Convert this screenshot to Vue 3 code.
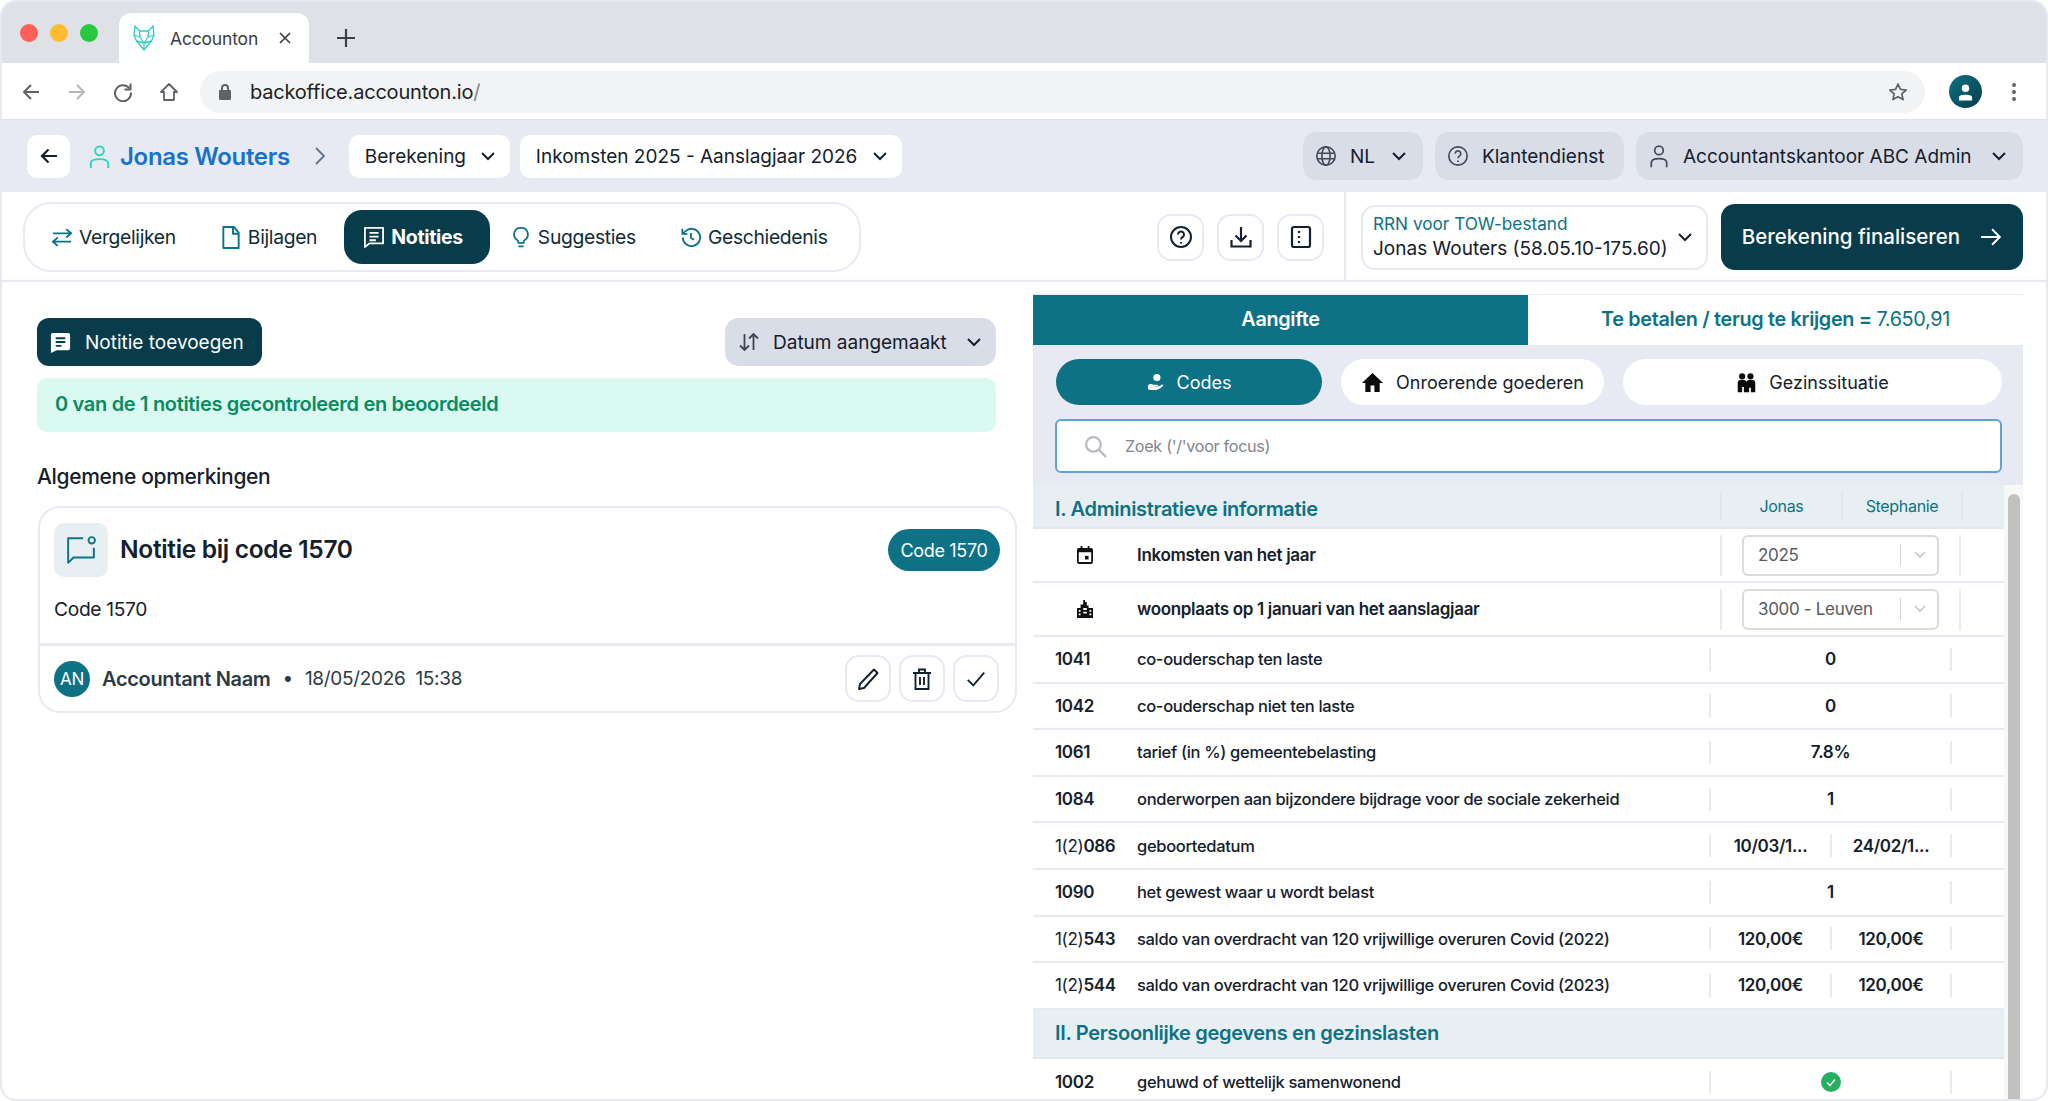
<template>
  <div class="window">
    <div class="tabStrip">
      <div class="lights">
        <span class="light light--red"></span>
        <span class="light light--amber"></span>
        <span class="light light--green"></span>
      </div>
      <div class="browserTab">
        <svg class="favicon" viewBox="0 0 24 26" fill="none" stroke="#2fd0bd" stroke-width="1.3" stroke-linejoin="round">
          <path d="M3 1l4.500 5h9L21 1l1 9-2.500 6L12 25 4.500 16 2 10z" />
          <path d="M2 10l6 2 4 6 4-6 6-2M7.500 6L8 12M16.500 6L16 12M4.500 16L12 18l7.500-2M12 18v7" />
        </svg>
        <span class="browserTabTitle">Accounton</span>
        <svg class="browserTabClose" viewBox="0 0 14 14" fill="none" stroke="#3c4043" stroke-width="1.700"><path d="M2 2l10 10M12 2L2 12" /></svg>
      </div>
      <svg class="newTab" viewBox="0 0 20 20" fill="none" stroke="#3c4043" stroke-width="2.200"><path d="M10 1v18M1 10h18" /></svg>
    </div>

    <div class="toolbar">
      <svg class="navIcon" viewBox="0 0 20 20" fill="none" stroke="#5f6368" stroke-width="2"><path d="M18 10H3M10 3l-7 7 7 7" /></svg>
      <svg class="navIcon" viewBox="0 0 20 20" fill="none" stroke="#b4b7bb" stroke-width="2"><path d="M2 10h15M10 3l7 7-7 7" /></svg>
      <svg class="navIcon" viewBox="0 0 20 20" fill="none" stroke="#5f6368" stroke-width="2"><path d="M16.500 6.500A8 8 0 1 0 18 10.500" /><path d="M17.500 1.500v6h-6" /></svg>
      <svg class="navIcon" viewBox="0 0 20 20" fill="none" stroke="#5f6368" stroke-width="1.800" stroke-linejoin="round"><path d="M10 2l8 8h-3v8H5v-8H2z" /></svg>
      <div class="addressBar">
        <svg class="lock" viewBox="0 0 14 18" fill="#5f6368"><path d="M2 7h1V5a4 4 0 0 1 8 0v2h1a1 1 0 0 1 1 1v8a1 1 0 0 1-1 1H2a1 1 0 0 1-1-1V8a1 1 0 0 1 1-1zm3 0h4V5a2 2 0 0 0-4 0z" /></svg>
        <span class="url">backoffice.accounton.io<span class="urlSlash">/</span></span>
        <svg class="star" viewBox="0 0 20 20" fill="none" stroke="#5f6368" stroke-width="1.700" stroke-linejoin="round"><path d="M10 2l2.400 5.400 5.800.6-4.400 3.900 1.300 5.700L10 14.700l-5.100 2.900 1.300-5.700L1.800 8l5.800-.6z" /></svg>
      </div>
      <div class="profile">
        <svg viewBox="0 0 16 18" width="15" height="18" fill="#fff"><circle cx="8" cy="5" r="4" /><path d="M1 18v-3c0-2 2-3 7-3s7 1 7 3v3z" /></svg>
      </div>
      <span class="kebab"><i></i><i></i><i></i></span>
    </div>

    <header class="appBar">
      <button class="backBtn" type="button">
        <svg viewBox="0 0 20 20" width="20" height="20" fill="none" stroke="#14202b" stroke-width="2.200"><path d="M18 10H3M9.500 3.500L3 10l6.500 6.500" /></svg>
      </button>
      <svg class="nameIcon" viewBox="0 0 24 28" fill="none" stroke="#2dd4bf" stroke-width="2.200"><circle cx="12" cy="7.500" r="5" /><path d="M2 27v-5c0-3 3-5 10-5s10 2 10 5v5" /></svg>
      <span class="clientName">Jonas Wouters</span>
      <svg class="crumb" viewBox="0 0 10 20" fill="none" stroke="#667085" stroke-width="1.800"><path d="M1 2l8 8-8 8" /></svg>
      <button class="whiteSelect selectCalc" type="button">Berekening
        <svg class="chev" viewBox="0 0 14 9"><path d="M1 1l6 6 6-6" /></svg>
      </button>
      <button class="whiteSelect selectYear" type="button">Inkomsten 2025 - Aanslagjaar 2026
        <svg class="chev" viewBox="0 0 14 9"><path d="M1 1l6 6 6-6" /></svg>
      </button>
      <div class="appBarRight">
        <button class="greyBtn greyLang" type="button">
          <svg class="greyIcon" viewBox="0 0 24 24" fill="none" stroke="#414a59" stroke-width="1.800"><circle cx="12" cy="12" r="10" /><ellipse cx="12" cy="12" rx="4.500" ry="10" /><path d="M2.500 9h19M2.500 15h19" /></svg>
          NL
          <svg class="chev" viewBox="0 0 14 9"><path d="M1 1l6 6 6-6" /></svg>
        </button>
        <button class="greyBtn greyHelp" type="button">
          <svg class="greyIcon" viewBox="0 0 24 24" fill="none" stroke="#414a59" stroke-width="1.800"><circle cx="12" cy="12" r="10" /><path d="M9 9.500a3 3 0 1 1 4.500 2.600c-1 .6-1.500 1.200-1.500 2.400" /><path d="M12 17v1.500" /></svg>
          Klantendienst
        </button>
        <button class="greyBtn greyUser" type="button">
          <svg class="greyIcon" viewBox="0 0 24 28" fill="none" stroke="#414a59" stroke-width="2"><circle cx="12" cy="7.500" r="5" /><path d="M3 27v-5c0-3 3-5 9-5s9 2 9 5v5" /></svg>
          Accountantskantoor ABC Admin
          <svg class="chev" viewBox="0 0 14 9"><path d="M1 1l6 6 6-6" /></svg>
        </button>
      </div>
    </header>

    <div class="subBar">
      <nav class="modeTabs">
        <a class="modeTab">
          <svg class="modeIcon" viewBox="0 0 24 24" fill="none" stroke="currentColor" stroke-width="2.200"><path d="M1 7h22M17 2l6 5-6 5M23 17H1M7 12l-6 5 6 5" /></svg>
          Vergelijken
        </a>
        <a class="modeTab modeTab--files">
          <svg class="modeIcon" viewBox="0 0 20 24" fill="none" stroke="currentColor" stroke-width="2" stroke-linejoin="round"><path d="M2 1h11l5 6v16H2z" /><path d="M12 1v7h6" /></svg>
          Bijlagen
        </a>
        <a class="modeTab modeTab--active">
          <svg class="modeIcon" viewBox="1 1 22 23" fill="none" stroke="currentColor" stroke-width="2" stroke-linejoin="round"><path d="M2 2h20v17H7l-5 4z" /><path d="M7 7.500h10M7 11.500h10M7 15.500h7" /></svg>
          Notities
        </a>
        <a class="modeTab">
          <svg class="modeIcon" viewBox="0 0 20 26" fill="none" stroke="currentColor" stroke-width="2"><path d="M10 2a7.500 7.500 0 0 0-4 14c.6.500 1 1 1 3h6c0-2 .4-2.500 1-3a7.500 7.500 0 0 0-4-14z" /><path d="M7 23h6" /></svg>
          Suggesties
        </a>
        <a class="modeTab">
          <svg class="modeIcon" viewBox="1 1 22 22" fill="none" stroke="currentColor" stroke-width="2"><path d="M3 12a9.500 9.500 0 1 0 3-7L2.500 8" /><path d="M2.500 2.500V8H8" /><path d="M12 7v5.500l3.500 2" /></svg>
          Geschiedenis
        </a>
      </nav>

      <div class="toolBtns">
        <button class="toolBtn" type="button">
          <svg viewBox="0 0 24 24" width="24" height="24" fill="none" stroke="#14202b" stroke-width="2"><circle cx="12" cy="12" r="10" /><path d="M9 9.500a3 3 0 1 1 4.500 2.600c-1 .6-1.500 1.200-1.500 2.400" /><path d="M12 17v1.500" /></svg>
        </button>
        <button class="toolBtn" type="button">
          <svg viewBox="0 0 24 24" width="24" height="24" fill="none" stroke="#14202b" stroke-width="2.200"><path d="M12 2v14M6.500 10.500L12 16l5.500-5.500M2.500 15v6.500h19V15" /></svg>
        </button>
        <button class="toolBtn" type="button">
          <svg viewBox="0 0 24 24" width="24" height="24" fill="none" stroke="#14202b" stroke-width="2.200" stroke-linejoin="round"><rect x="3" y="2" width="18" height="20" rx="2" /><path d="M10 6v2M10 11v2M10 16v2" /></svg>
        </button>
      </div>

      <div class="finaliseArea">
        <button class="rrnSelect" type="button">
          <span class="rrnText">
            <span class="rrnLabel">RRN voor TOW-bestand</span>
            <span class="rrnValue">Jonas Wouters (58.05.10-175.60)</span>
          </span>
          <svg class="chev" viewBox="0 0 14 9"><path d="M1 1l6 6 6-6" /></svg>
        </button>
        <button class="finaliseBtn" type="button">
          Berekening finaliseren
          <svg viewBox="0 0 20 20" width="22" height="22" fill="none" stroke="#fff" stroke-width="1.800"><path d="M1 10h17M11 3l7 7-7 7" /></svg>
        </button>
      </div>
    </div>

    <main class="main">
      <section class="notes">
        <div class="notesHead">
          <button class="addBtn" type="button">
            <svg viewBox="0 0 24 24" width="23" height="23"><path fill="#fff" d="M4 2h16a2 2 0 0 1 2 2v14a2 2 0 0 1-2 2H8l-6 3V4a2 2 0 0 1 2-2z" /><path stroke="#083c4a" stroke-width="2" d="M7 7.500h10M7 11.500h10M7 15.500h6" /></svg>
            Notitie toevoegen
          </button>
          <button class="sortBtn" type="button">
            <svg viewBox="0 0 24 24" width="24" height="24" fill="none" stroke="#3b4452" stroke-width="1.800"><path d="M7.500 4v16M3 15.500L7.500 20l4.500-4.500M16.500 20V4M12 8.500L16.500 4 21 8.500" /></svg>
            Datum aangemaakt
            <svg class="chev" viewBox="0 0 14 9"><path d="M1 1l6 6 6-6" /></svg>
          </button>
        </div>
        <div class="progress">0 van de 1 notities gecontroleerd en beoordeeld</div>
        <h2 class="groupTitle">Algemene opmerkingen</h2>

        <article class="noteCard">
          <div class="noteTop">
            <div class="noteTile">
              <svg viewBox="0 0 28 28" width="30" height="30" fill="none" stroke="#0d7285" stroke-width="1.800" stroke-linejoin="round"><path d="M16 3H2v23l5-5h19v-9" /><circle cx="24" cy="5" r="3" /></svg>
            </div>
            <h3 class="noteTitle">Notitie bij code 1570</h3>
            <span class="codeBadge">Code 1570</span>
          </div>
          <p class="noteBody">Code 1570</p>
          <div class="noteFoot">
            <span class="avatar">AN</span>
            <span class="author">Accountant Naam</span>
            <span class="dot">•</span>
            <span class="stamp">18/05/2026&nbsp; 15:38</span>
            <div class="noteActions">
              <button class="noteAction" type="button">
                <svg viewBox="0 0 24 24" width="24" height="24" fill="none" stroke="#14202b" stroke-width="1.900" stroke-linejoin="round"><path d="M18 2.500l3.500 3.500L8 21l-5 1 1-5z" /></svg>
              </button>
              <button class="noteAction" type="button">
                <svg viewBox="0 0 24 24" width="24" height="24" fill="none" stroke="#14202b" stroke-width="1.900"><path d="M3 6h18M9 6V2.500h6V6M5.500 6v16h13V6M10 10v8M14 10v8" /></svg>
              </button>
              <button class="noteAction" type="button">
                <svg viewBox="0 0 24 24" width="22" height="22" fill="none" stroke="#14202b" stroke-width="2"><path d="M3 13l6 6L21 5" /></svg>
              </button>
            </div>
          </div>
        </article>
      </section>

      <section class="filing">
        <div class="filingTabs">
          <div class="filingTab filingTab--active">Aangifte</div>
          <div class="filingTab">Te betalen / terug te krijgen = <span class="filingAmount">7.650,91</span></div>
        </div>
        <div class="filingControls">
          <div class="pills">
            <button class="pill pill--active pill--codes" type="button">
              <svg viewBox="0 0 20 20" width="18" height="18" fill="#fff"><circle cx="11" cy="5" r="4" /><path d="M1 14c2-2 4-2 6-1h4c2 0 2 2 0 2H8c3 1 5 0 8-2 2-1 3 1 1 2-3 3-6 4-9 4H4l-3-1z" /></svg>
              Codes
            </button>
            <button class="pill pill--property" type="button">
              <svg viewBox="0 0 24 24" width="23" height="23" fill="#0b0b0b"><path d="M12 2L1 12.500h3.500V22H10v-7h4v7h5.500v-9.500H23z" /></svg>
              Onroerende goederen
            </button>
            <button class="pill pill--family" type="button">
              <svg viewBox="0 0 24 24" width="21" height="23" fill="#0b0b0b"><circle cx="7" cy="5" r="3.500" /><circle cx="16.500" cy="5" r="3.500" /><path d="M2 23V12a3 3 0 0 1 3-3h4a3 3 0 0 1 3 3 3 3 0 0 1 3-3h3.500A3.500 3.500 0 0 1 22 12.500V23h-5v-5h-2v5H9v-6H7v6z" /></svg>
              Gezinssituatie
            </button>
          </div>
          <div class="search">
            <svg viewBox="0 0 24 24" width="25" height="25" fill="none" stroke="#b8bcc2" stroke-width="2.200"><circle cx="10" cy="10" r="7" /><path d="M15 15l7 7" /></svg>
            <span class="searchHint">Zoek ('/'voor focus)</span>
          </div>
        </div>

        <div class="tableWrap">
          <div class="table">
            <div class="sectionRow sectionRow--columns">
              <span class="sectionTitle">I. Administratieve informatie</span>
              <span class="personCol">Jonas</span>
              <span class="personCol">Stephanie</span>
              <span class="personEnd"></span>
            </div>

            <div v-for="row in selectRows" :key="row.label" class="selectRow">
              <span class="rowIcon">
                <svg v-if="row.icon === 'calendar'" viewBox="0 0 18 20" width="16" height="18" fill="#111"><path d="M4 0h2v2h6V0h2v2h2a2 2 0 0 1 2 2v14a2 2 0 0 1-2 2H2a2 2 0 0 1-2-2V4a2 2 0 0 1 2-2h2zM2 7v11h14V7z" /><rect x="9" y="11" width="4" height="4" /></svg>
                <svg v-else viewBox="0 0 18 20" width="16" height="18" fill="#111"><path d="M7 0h2v2h2v4h2v3h5v11H0V9h4V5h3zM2 11v2h2v-2zm0 4v2h2v-2zm5-6v2h4V9zm0 4v2h4v-2zm7-2v2h2v-2zm0 4v2h2v-2z" /></svg>
              </span>
              <span class="selectLabel">{{ row.label }}</span>
              <div class="selectCell">
                <div class="formSelect">
                  <span>{{ row.value }}</span>
                  <span class="formSelectSep"></span>
                  <svg viewBox="0 0 14 9" width="12" height="8" fill="none" stroke="#c2c4c8" stroke-width="1.800"><path d="M1 1l6 6 6-6" /></svg>
                </div>
              </div>
            </div>

            <template v-for="row in codeRows" :key="row.code">
              <div class="codeRow">
                <span class="code"><span v-if="row.prefix" class="codePrefix">{{ row.prefix }}</span>{{ row.code }}</span>
                <span class="desc">{{ row.label }}</span>
                <span v-if="row.values.length === 1" class="valueCell valueCell--wide">{{ row.values[0] }}</span>
                <template v-else>
                  <span class="valueCell">{{ row.values[0] }}</span>
                  <span class="valueCell">{{ row.values[1] }}</span>
                </template>
                <span class="valueEnd"></span>
              </div>
            </template>

            <div class="sectionRow sectionRow--second">
              <span class="sectionTitle">II. Persoonlijke gegevens en gezinslasten</span>
            </div>

            <div class="codeRow codeRow--last">
              <span class="code">1002</span>
              <span class="desc">gehuwd of wettelijk samenwonend</span>
              <span class="valueCell valueCell--wide">
                <svg viewBox="0 0 20 20" width="20" height="20"><circle cx="10" cy="10" r="10" fill="#27ae60" /><path d="M6 10.500l3 3 5-6" fill="none" stroke="#fff" stroke-width="1.400" /></svg>
              </span>
              <span class="valueEnd"></span>
            </div>
          </div>
          <div class="scrollTrack"><div class="scrollThumb"></div></div>
        </div>
      </section>
    </main>
  </div>
</template>

<script setup>
const selectRows = [
  { icon: 'calendar', label: 'Inkomsten van het jaar', value: '2025' },
  { icon: 'building', label: 'woonplaats op 1 januari van het aanslagjaar', value: '3000 - Leuven' }
]

const codeRows = [
  { code: '1041', label: 'co-ouderschap ten laste', values: ['0'] },
  { code: '1042', label: 'co-ouderschap niet ten laste', values: ['0'] },
  { code: '1061', label: 'tarief (in %) gemeentebelasting', values: ['7.8%'] },
  { code: '1084', label: 'onderworpen aan bijzondere bijdrage voor de sociale zekerheid', values: ['1'] },
  { prefix: '1(2)', code: '086', label: 'geboortedatum', values: ['10/03/1...', '24/02/1...'] },
  { code: '1090', label: 'het gewest waar u wordt belast', values: ['1'] },
  { prefix: '1(2)', code: '543', label: 'saldo van overdracht van 120 vrijwillige overuren Covid (2022)', values: ['120,00€', '120,00€'] },
  { prefix: '1(2)', code: '544', label: 'saldo van overdracht van 120 vrijwillige overuren Covid (2023)', values: ['120,00€', '120,00€'] }
]
</script>

<style>
html,
body {
  margin: 0;
  background: #fff;
}
</style>

<style scoped>
* {
  box-sizing: border-box;
}

button {
  font: inherit;
  border: 0;
  cursor: pointer;
}

.window {
  width: 2048px;
  height: 1101px;
  overflow: hidden;
  border: 2px solid #e7e9ef;
  border-radius: 16px;
  background: #fff;
  color: #14202b;
  font-family: Inter, "Liberation Sans", sans-serif;
  letter-spacing: -0.02em;
}

/* browser chrome */
.tabStrip {
  height: 61px;
  padding-left: 18px;
  background: #dee1e6;
  display: flex;
  align-items: flex-end;
}

.lights {
  display: flex;
  gap: 12px;
  align-self: flex-start;
  margin-top: 22px;
}

.light {
  width: 18px;
  height: 18px;
  border-radius: 50%;
}

.light--red { background: #ff5f57; }
.light--amber { background: #febc2e; }
.light--green { background: #28c840; }

.browserTab {
  width: 190px;
  height: 50px;
  margin-left: 21px;
  padding: 0 17px 0 13px;
  background: #fff;
  border-radius: 12px 12px 0 0;
  display: flex;
  align-items: center;
}

.favicon {
  width: 24px;
  height: 26px;
}

.browserTabTitle {
  margin-left: 14px;
  font-size: 17.500px;
  color: #3c4043;
  letter-spacing: -0.01em;
}

.browserTabClose {
  width: 14px;
  height: 14px;
  margin-left: auto;
}

.newTab {
  width: 20px;
  height: 20px;
  margin: 0 0 15px 27px;
}

.toolbar {
  height: 57px;
  padding: 1px 0 0 19px;
  background: #fff;
  border-bottom: 1px solid #dfe1e5;
  display: flex;
  align-items: center;
}

.navIcon {
  width: 20px;
  height: 20px;
  margin-right: 26px;
}

.addressBar {
  width: 1725px;
  height: 42px;
  margin-left: -5px;
  padding: 0 18px 0 18px;
  border-radius: 21px;
  background: #f1f3f4;
  display: flex;
  align-items: center;
}

.lock {
  width: 14px;
  height: 18px;
}

.url {
  margin-left: 18px;
  font-size: 20px;
  color: #202124;
  letter-spacing: -0.01em;
}

.urlSlash {
  color: #80868b;
}

.star {
  width: 20px;
  height: 20px;
  margin-left: auto;
  margin-right: -1px;
}

.profile {
  width: 33px;
  height: 33px;
  margin-left: 24px;
  border-radius: 50%;
  background: linear-gradient(135deg, #0d7285, #083c4a);
  display: grid;
  place-items: center;
}

.kebab {
  margin-left: 30px;
  display: grid;
  gap: 3px;
}

.kebab i {
  width: 4px;
  height: 4px;
  border-radius: 50%;
  background: #5f6368;
}

/* app header */
.appBar {
  height: 72px;
  padding: 0 23px 0 25px;
  background: #e7eaf3;
  display: flex;
  align-items: center;
  font-size: 19px;
}

.backBtn {
  width: 43px;
  height: 43px;
  border-radius: 10px;
  background: #fff;
  display: grid;
  place-items: center;
}

.nameIcon {
  width: 21px;
  height: 25px;
  margin-left: 19px;
}

.clientName {
  margin-left: 10px;
  font-size: 24px;
  font-weight: 600;
  color: #1673c8;
}

.crumb {
  width: 10px;
  height: 20px;
  margin: 0 24px 0 25px;
}

.whiteSelect {
  height: 43px;
  padding: 0 15px 0 16px;
  border-radius: 10px;
  background: #fff;
  color: #14202b;
  display: flex;
  align-items: center;
  justify-content: space-between;
}

.selectCalc { width: 161px; }
.selectYear { width: 382px; margin-left: 10px; }

.chev {
  width: 14px;
  height: 9px;
  fill: none;
  stroke: #14202b;
  stroke-width: 2;
  flex: none;
}

.appBarRight {
  margin-left: auto;
  display: flex;
  gap: 12px;
}

.greyBtn {
  height: 48px;
  padding: 0 12px;
  border-radius: 14px;
  background: #d9dde8;
  color: #14202b;
  display: flex;
  align-items: center;
}

.greyIcon {
  width: 22px;
  height: 24px;
  margin-right: 13px;
  flex: none;
}

.greyLang { width: 120px; }
.greyHelp { width: 189px; }
.greyUser { width: 387px; }
.greyLang .chev,
.greyUser .chev {
  margin-left: auto;
  margin-right: 5px;
}

/* mode bar */
.subBar {
  height: 90px;
  padding: 2px 0 0 21px;
  border-bottom: 2px solid #e7eaf3;
  display: flex;
  align-items: center;
}

.modeTabs {
  width: 838px;
  height: 70px;
  padding: 0 7px;
  border: 2px solid #e7eaf3;
  border-radius: 28px;
  display: flex;
  align-items: center;
  gap: 1px;
  font-size: 19.300px;
  color: #0f2b36;
}

.modeTab {
  height: 54px;
  padding: 0 24px 0 20px;
  border-radius: 18px;
  display: flex;
  align-items: center;
  gap: 7px;
}

.modeTab--files {
  padding-right: 26px;
}

.modeTab--active {
  padding-right: 27px;
  background: #083c4a;
  color: #fff;
  font-size: 19.500px;
  font-weight: 700;
}

.modeIcon {
  width: 20px;
  height: 23px;
  color: #0d7285;
  flex: none;
}

.modeTab--active .modeIcon {
  color: #fff;
}

.toolBtns {
  margin-left: auto;
  display: flex;
  gap: 13px;
  padding-right: 20px;
}

.toolBtn {
  width: 47px;
  height: 47px;
  border: 2px solid #e7eaf3;
  border-radius: 14px;
  background: #fff;
  display: grid;
  place-items: center;
}

.finaliseArea {
  align-self: stretch;
  margin-top: -2px;
  padding: 2px 23px 0 15px;
  border-left: 2px solid #e7eaf3;
  display: flex;
  align-items: center;
  gap: 13px;
}

.rrnSelect {
  width: 347px;
  height: 65px;
  padding: 0 14px 0 10px;
  border: 2px solid #e7eaf3;
  border-radius: 14px;
  background: #fff;
  color: #14202b;
  display: flex;
  align-items: center;
  justify-content: space-between;
  text-align: left;
}

.rrnText {
  padding-bottom: 2px;
  display: grid;
  gap: 3px;
}

.rrnLabel {
  font-size: 17.200px;
  color: #0d7285;
}

.rrnValue {
  font-size: 19px;
}

.finaliseBtn {
  width: 302px;
  height: 66px;
  padding-bottom: 2px;
  border-radius: 14px;
  background: #083c4a;
  color: #fff;
  font-size: 20.500px;
  font-weight: 500;
  display: flex;
  align-items: center;
  justify-content: center;
  gap: 20px;
}

/* notes column */
.main {
  display: flex;
  padding-top: 12px;
}

.notes {
  width: 1031px;
  padding: 24px 0 0 35px;
}

.notesHead {
  width: 959px;
  display: flex;
  justify-content: space-between;
}

.addBtn {
  width: 225px;
  height: 48px;
  padding-left: 12px;
  border-radius: 12px;
  background: #083c4a;
  color: #fff;
  font-size: 19px;
  display: flex;
  align-items: center;
  gap: 13px;
}

.sortBtn {
  width: 271px;
  height: 48px;
  padding: 0 15px 0 12px;
  border-radius: 14px;
  background: #d9dde8;
  color: #14202b;
  font-size: 19px;
  display: flex;
  align-items: center;
  gap: 12px;
}

.sortBtn .chev {
  margin-left: auto;
}

.progress {
  width: 959px;
  height: 54px;
  margin-top: 12px;
  padding: 0 0 2px 18px;
  border-radius: 10px;
  background: #d9f9f1;
  color: #0b8a62;
  font-size: 20px;
  font-weight: 600;
  display: flex;
  align-items: center;
}

.groupTitle {
  margin: 31px 0 15px;
  font-size: 21px;
  line-height: 28px;
  font-weight: 500;
}

.noteCard {
  width: 979px;
  height: 207px;
  margin-left: 1px;
  border: 2px solid #e7eaf3;
  border-radius: 22px;
  display: flex;
  flex-direction: column;
}

.noteTop {
  padding: 15px 15px 0 14px;
  display: flex;
  align-items: center;
  gap: 12px;
}

.noteTile {
  width: 54px;
  height: 54px;
  border-radius: 10px;
  background: #e7eff3;
  display: grid;
  place-items: center;
}

.noteTitle {
  margin: -2px 0 0;
  font-size: 24.500px;
  font-weight: 600;
}

.codeBadge {
  width: 112px;
  height: 42px;
  margin-left: auto;
  border-radius: 21px;
  background: #0d7285;
  color: #fff;
  font-size: 18px;
  display: grid;
  place-items: center;
}

.noteBody {
  margin: 19px 0 0 14px;
  font-size: 19.200px;
  line-height: 26px;
}

.noteFoot {
  margin-top: auto;
  height: 68px;
  padding: 0 16px 0 14px;
  border-top: 3px solid #e7eaf3;
  display: flex;
  align-items: center;
  font-size: 19px;
}

.avatar {
  width: 36px;
  height: 36px;
  border-radius: 50%;
  background: #0d7285;
  color: #fff;
  font-size: 17px;
  display: grid;
  place-items: center;
}

.author {
  margin-left: 12px;
  font-size: 20px;
  font-weight: 600;
  color: #2d3a45;
}

.dot {
  margin: 0 12px;
  color: #2d3a45;
}

.stamp {
  color: #2d3a45;
}

.noteActions {
  margin-left: auto;
  display: flex;
  gap: 8px;
}

.noteAction {
  width: 46px;
  height: 47px;
  border: 2px solid #e7eaf3;
  border-radius: 14px;
  background: #fff;
  display: grid;
  place-items: center;
}

/* filing column */
.filing {
  width: 990px;
}

.filingTabs {
  width: 990px;
  height: 51px;
  display: flex;
  border-top: 1px solid #e7eaf3;
}

.filingTab {
  width: 495px;
  padding-bottom: 2px;
  display: flex;
  align-items: center;
  justify-content: center;
  color: #0d7285;
  font-size: 19.800px;
  font-weight: 600;
  white-space: pre-wrap;
}

.filingTab--active {
  background: #0d7285;
  color: #fff;
}

.filingAmount {
  font-weight: 400;
}

.filingControls {
  height: 140px;
  padding: 14px 0 0 23px;
  background: #e7eaf3;
}

.pills {
  display: flex;
  gap: 19px;
}

.pill {
  height: 46px;
  padding-bottom: 1px;
  border-radius: 23px;
  background: #fff;
  color: #14202b;
  font-size: 18px;
  display: flex;
  align-items: center;
  justify-content: center;
  gap: 12px;
}

.pill--codes { width: 266px; }
.pill--property { width: 263px; }
.pill--family { width: 379px; }

.pill--active {
  background: #0d7285;
  color: #fff;
}

.search {
  width: 947px;
  height: 54px;
  margin: 14px 0 0 -1px;
  padding-left: 26px;
  border: 2px solid #5ea3d2;
  border-radius: 6px;
  background: #fff;
  display: flex;
  align-items: center;
  gap: 17px;
}

.searchHint {
  color: #80858c;
  font-size: 16.200px;
}

.tableWrap {
  display: flex;
  height: 617px;
}

.table {
  width: 971px;
  flex: none;
}

.sectionRow {
  background: #e7eff3;
  border-bottom: 2px solid #e3e6ec;
  padding-left: 22px;
}

.sectionRow--columns {
  height: 44px;
  display: grid;
  grid-template-columns: 1fr 121px 120px 43px;
  align-items: center;
}

.sectionRow--second {
  height: 49px;
  display: flex;
  align-items: center;
}

.sectionTitle {
  color: #0d7285;
  font-size: 20px;
  font-weight: 600;
}

.sectionRow--columns .sectionTitle {
  padding-top: 6px;
}

.personCol {
  height: 28px;
  border-left: 2px solid #dfe5ea;
  color: #0d7285;
  font-size: 16px;
  text-align: center;
  line-height: 28px;
}

.personEnd {
  height: 28px;
  border-left: 2px solid #dfe5ea;
}

.selectRow {
  height: 54px;
  border-bottom: 2px solid #e7eaf3;
  display: grid;
  grid-template-columns: 104px 1fr 241px 43px;
  align-items: center;
  font-size: 17px;
  font-weight: 600;
}

.rowIcon {
  display: flex;
  justify-content: center;
}

.selectCell {
  height: 41px;
  border-left: 2px solid #e7eaf3;
  border-right: 2px solid #e7eaf3;
  display: grid;
  place-items: center;
  grid-column: 3;
}

.formSelect {
  width: 197px;
  height: 41px;
  padding: 0 11px 0 14px;
  border: 2px solid #d9dbde;
  border-radius: 6px;
  color: #565b61;
  font-weight: 400;
  display: flex;
  align-items: center;
}

.formSelectSep {
  width: 1px;
  height: 22px;
  margin: 0 13px 0 auto;
  background: #d2d4d7;
}

.codeRow {
  height: 46.600px;
  border-bottom: 2px solid #e7eaf3;
  display: grid;
  grid-template-columns: 104px 572px 121px 120px 54px;
  align-items: center;
  font-size: 16.500px;
  font-weight: 500;
}

.codeRow--last {
  border-bottom: 0;
}

.code {
  padding-left: 22px;
  font-size: 17px;
  font-weight: 600;
}

.codePrefix {
  font-weight: 400;
}

.valueCell {
  height: 23px;
  border-left: 2px solid #e7eaf3;
  display: flex;
  align-items: center;
  justify-content: center;
  font-size: 17px;
  font-weight: 600;
}

.valueCell--wide {
  grid-column: span 2;
}

.valueEnd {
  height: 23px;
  border-left: 2px solid #e7eaf3;
}

.scrollTrack {
  width: 19px;
  padding: 9px 3px 0 4px;
  background: #f8f8f8;
}

.scrollThumb {
  height: 100%;
  border-radius: 6px 6px 0 0;
  background: #c1c1c1;
}
</style>
